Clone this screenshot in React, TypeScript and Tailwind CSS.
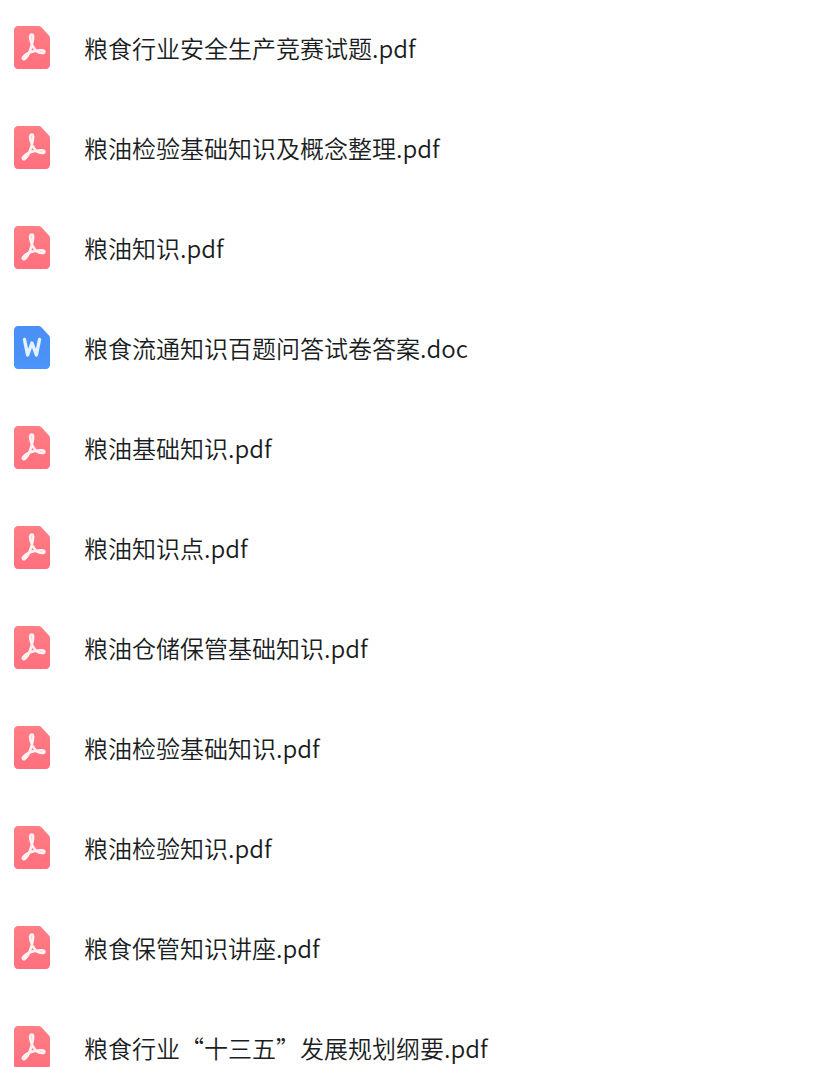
const FILES = [
  {name: '粮食行业安全生产竞赛试题.pdf', type: 'pdf'},
  {name: '粮油检验基础知识及概念整理.pdf', type: 'pdf'},
  {name: '粮油知识.pdf', type: 'pdf'},
  {name: '粮食流通知识百题问答试卷答案.doc', type: 'doc'},
  {name: '粮油基础知识.pdf', type: 'pdf'},
  {name: '粮油知识点.pdf', type: 'pdf'},
  {name: '粮油仓储保管基础知识.pdf', type: 'pdf'},
  {name: '粮油检验基础知识.pdf', type: 'pdf'},
  {name: '粮油检验知识.pdf', type: 'pdf'},
  {name: '粮食保管知识讲座.pdf', type: 'pdf'},
  {name: '粮食行业“十三五”发展规划纲要.pdf', type: 'pdf'},
];

const SHEET =
  'M4 0H24.5C25.6 0 26.6 .4 27.4 1.2L34.8 9.2C35.6 10 36 11 36 12V39C36 41.2 34.2 43 32 43H4C1.8 43 0 41.2 0 39V4C0 1.8 1.8 0 4 0Z';

function PdfIcon() {
  return (
    <svg width="36" height="43" viewBox="0 0 36 43" className="shrink-0">
      <defs>
        <linearGradient id="pdf-sheet" x1="0" y1="0" x2="0" y2="1">
          <stop offset="0" stopColor="#ff7d84" />
          <stop offset="1" stopColor="#ff6f7e" />
        </linearGradient>
      </defs>
      <path d={SHEET} fill="url(#pdf-sheet)" />
      <path
        d="M18 8.5C15.8 8.5 15.8 11.5 16.6 14.5C17.7 18.5 20.4 23.5 23 25.4C25.4 27 30.2 27.8 30.4 25.8C30.6 24 26 24 22 24.8C17.6 25.6 12 28 9.6 30.6C8 32.2 9 33.8 10.6 33C13.2 31.6 16.2 24.6 17.6 19.6C18.7 15.6 20.2 8.5 18 8.5Z"
        fill="none"
        stroke="#fff"
        strokeOpacity=".9"
        strokeWidth="2.6"
        strokeLinejoin="round"
      />
    </svg>
  );
}

function DocIcon() {
  return (
    <svg width="36" height="43" viewBox="0 0 36 43" className="shrink-0">
      <defs>
        <linearGradient id="doc-sheet" x1="0" y1="0" x2="0" y2="1">
          <stop offset="0" stopColor="#4b8ff5" />
          <stop offset="1" stopColor="#4a94fa" />
        </linearGradient>
      </defs>
      <path d={SHEET} fill="url(#doc-sheet)" />
      <path
        d="M10.5 13.5L13.6 29L18 17L22.4 29L25.5 13.5"
        fill="none"
        stroke="#e6f1ff"
        strokeWidth="3.4"
        strokeLinejoin="round"
        strokeLinecap="round"
      />
    </svg>
  );
}

export default function App() {
  return (
    <div className="h-[1067px] overflow-hidden bg-white font-['Noto_Sans_CJK_SC','Noto_Sans',sans-serif] text-[#1a1d22]">
      {FILES.map(file => (
        <div key={file.name} className="flex h-[100px] items-center gap-[34px] pb-[5px] pl-[14px]">
          {file.type === 'pdf' ? <PdfIcon /> : <DocIcon />}
          <span className="text-[24px] font-[350] leading-none whitespace-nowrap">{file.name}</span>
        </div>
      ))}
    </div>
  );
}
